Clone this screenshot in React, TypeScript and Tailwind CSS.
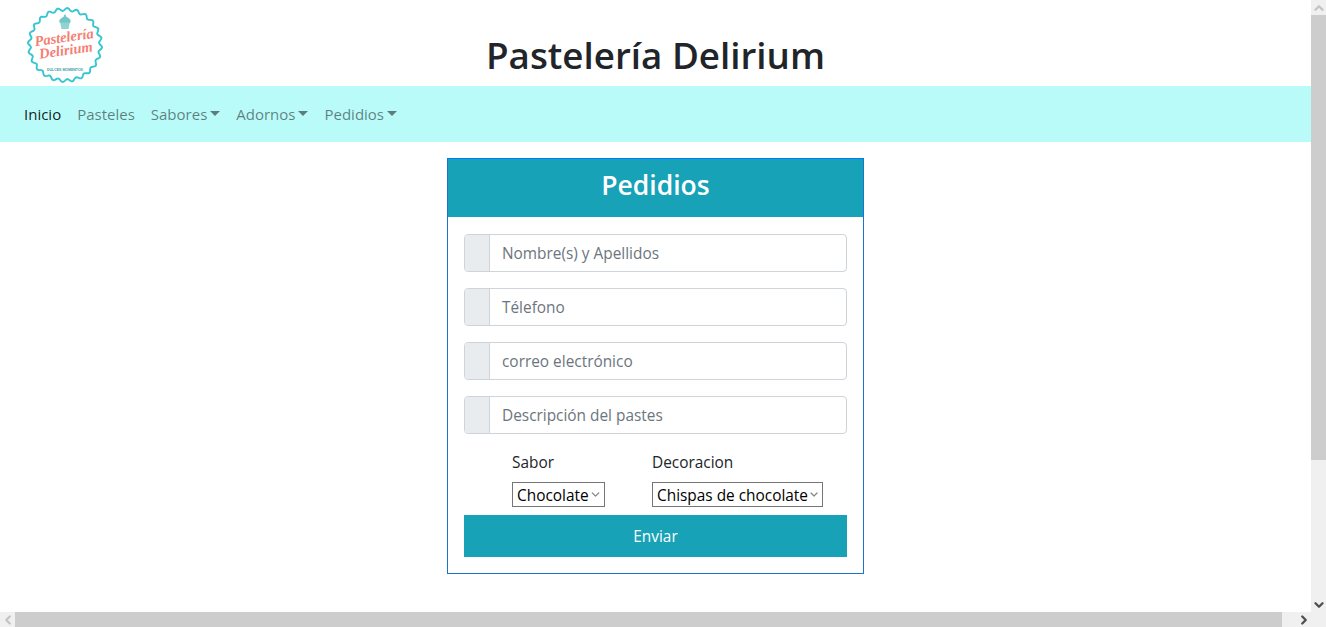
import { ChevronDown, ChevronLeft, ChevronRight, ChevronUp } from 'lucide-react';

const fieldNames = ['Nombre(s) y Apellidos', 'Télefono', 'correo electrónico', 'Descripción del pastes'];

// wavy badge edge of the logo
const badgePath = () => {
  const points: string[] = [];
  for (let i = 0; i <= 360; i += 2) {
    const angle = (i * Math.PI) / 180;
    const r = 35.6 + 1.5 * Math.sin(angle * 24);
    points.push(`${(39 + r * Math.cos(angle)).toFixed(2)},${(39 + r * Math.sin(angle)).toFixed(2)}`);
  }
  return `M${points.join('L')}Z`;
};

const Logo = () => (
  <div className="relative w-[78px] h-[78px]">
    <svg width="78" height="78" viewBox="0 0 78 78" className="block">
      <path d={badgePath()} fill="white" stroke="#35c6d0" strokeWidth="1.9" />
      <path d="M34 16h10l-1.5 7h-7z" fill="#8fd3d3" />
      <path d="M33.5 16.5c-1-4 2.5-4 5.5-7 3 3 6.500 3 5.500 7z" fill="#73c6c6" />
      <circle cx="39" cy="9.500" r="1" fill="#73c6c6" />
    </svg>
    <div className="absolute left-0 top-[25px] w-[78px] -rotate-[8deg] text-center font-['Liberation_Serif',serif] italic font-bold text-[#f57f73] text-[14.500px] leading-[13px]">
      <div>Pastelería</div>
      <div>Delirium</div>
    </div>
    <div className="absolute left-0 top-[62px] w-[78px] text-center font-['Liberation_Sans',sans-serif] font-bold text-[3.500px] leading-[4px] text-[#3d9ea5]">
      DULCES MOMENTOS
    </div>
  </div>
);

const NavItem = ({ label, active, caret }: { label: string; active?: boolean; caret?: boolean }) => (
  <a className={`flex items-center px-2 text-[15px] ${active ? 'text-black/90' : 'text-black/50'}`}>
    {label}
    {caret && <span className="ml-[3px] mt-[-1px] w-0 h-0 border-x-[5px] border-x-transparent border-t-[5px] border-t-black/50" />}
  </a>
);

export default function App() {
  return (
    <div className="flex h-[627px] w-[1326px] overflow-hidden bg-white font-['Open_Sans',sans-serif] text-[15.400px] text-[#212529]">
      <div className="flex flex-col w-[1311px]">
        <main className="flex-1">
          <header className="grid grid-cols-[1fr_auto_1fr] h-[86px]">
            <div className="pl-[26px] pt-[6px]">
              <Logo />
            </div>
            <h1 className="self-end pb-[7px] text-[36.750px] leading-[48px] font-semibold">Pastelería Delirium</h1>
            <div />
          </header>

          <nav className="flex items-center h-[56px] px-4 bg-[#b9fbf9]">
            <NavItem label="Inicio" active />
            <NavItem label="Pasteles" />
            <NavItem label="Sabores" caret />
            <NavItem label="Adornos" caret />
            <NavItem label="Pedidios" caret />
          </nav>

          <section className="mx-auto mt-4 w-[417px] h-[416px] border border-[#1a73d0] border-t-[#007bff]">
            <div className="flex items-center justify-center h-[58px] pb-[4px] bg-[#17a2b8] text-white text-[26.500px] font-semibold">
              Pedidios
            </div>
            <form className="flex flex-col gap-4 px-4 pt-[17px]">
              {fieldNames.map((name) => (
                <div key={name} className="flex h-[38px] border border-[#ced4da] rounded">
                  <span className="w-[25px] bg-[#e9ecef] border-r border-[#ced4da] rounded-l" />
                  <span className="flex items-center pl-3 pt-[2px] text-[#6c757d]">{name}</span>
                </div>
              ))}
            </form>
            <div className="flex pl-[64px] pt-[16px]">
              <div className="w-[140px]">
                <div className="pt-[1px] leading-[24px] mb-[7px]">Sabor</div>
                <div className="flex items-center justify-between w-[93px] h-[25px] border border-[#767676] pl-1 pr-[2px] text-black whitespace-nowrap">
                  <span className="pt-[2px]">Chocolate</span>
                  <ChevronDown size={13} strokeWidth={2.5} className="text-[#888]" />
                </div>
              </div>
              <div>
                <div className="pt-[1px] leading-[24px] mb-[7px]">Decoracion</div>
                <div className="flex items-center justify-between w-[171px] h-[25px] border border-[#767676] pl-1 pr-[2px] text-black whitespace-nowrap">
                  <span className="pt-[2px]">Chispas de chocolate</span>
                  <ChevronDown size={13} strokeWidth={2.5} className="text-[#888]" />
                </div>
              </div>
            </div>
            <button className="block mx-4 mt-2 w-[383px] h-[42px] pt-[2px] bg-[#17a2b8] text-white text-center">Enviar</button>
          </section>
        </main>

        <div className="flex items-center h-[15px] bg-[#f0f0f0]">
          <div className="flex justify-center w-[15px]">
            <ChevronLeft size={14} strokeWidth={4} className="text-[#c4c4c4]" />
          </div>
          <div className="w-[1267px] h-full bg-[#cdcdcd]" />
          <div className="flex-1" />
          <div className="flex justify-center w-[15px]">
            <ChevronRight size={14} strokeWidth={4} className="text-[#505050]" />
          </div>
        </div>
      </div>

      <div className="flex flex-col w-[15px] bg-[#f0f0f0]">
        <div className="flex items-center justify-center h-[15px]">
          <ChevronUp size={14} strokeWidth={4} className="text-[#c4c4c4]" />
        </div>
        <div className="h-[445px] bg-[#cdcdcd]" />
        <div className="flex-1" />
        <div className="flex items-center justify-center h-[15px] mb-[15px]">
          <ChevronDown size={14} strokeWidth={4} className="text-[#505050]" />
        </div>
      </div>
    </div>
  );
}
